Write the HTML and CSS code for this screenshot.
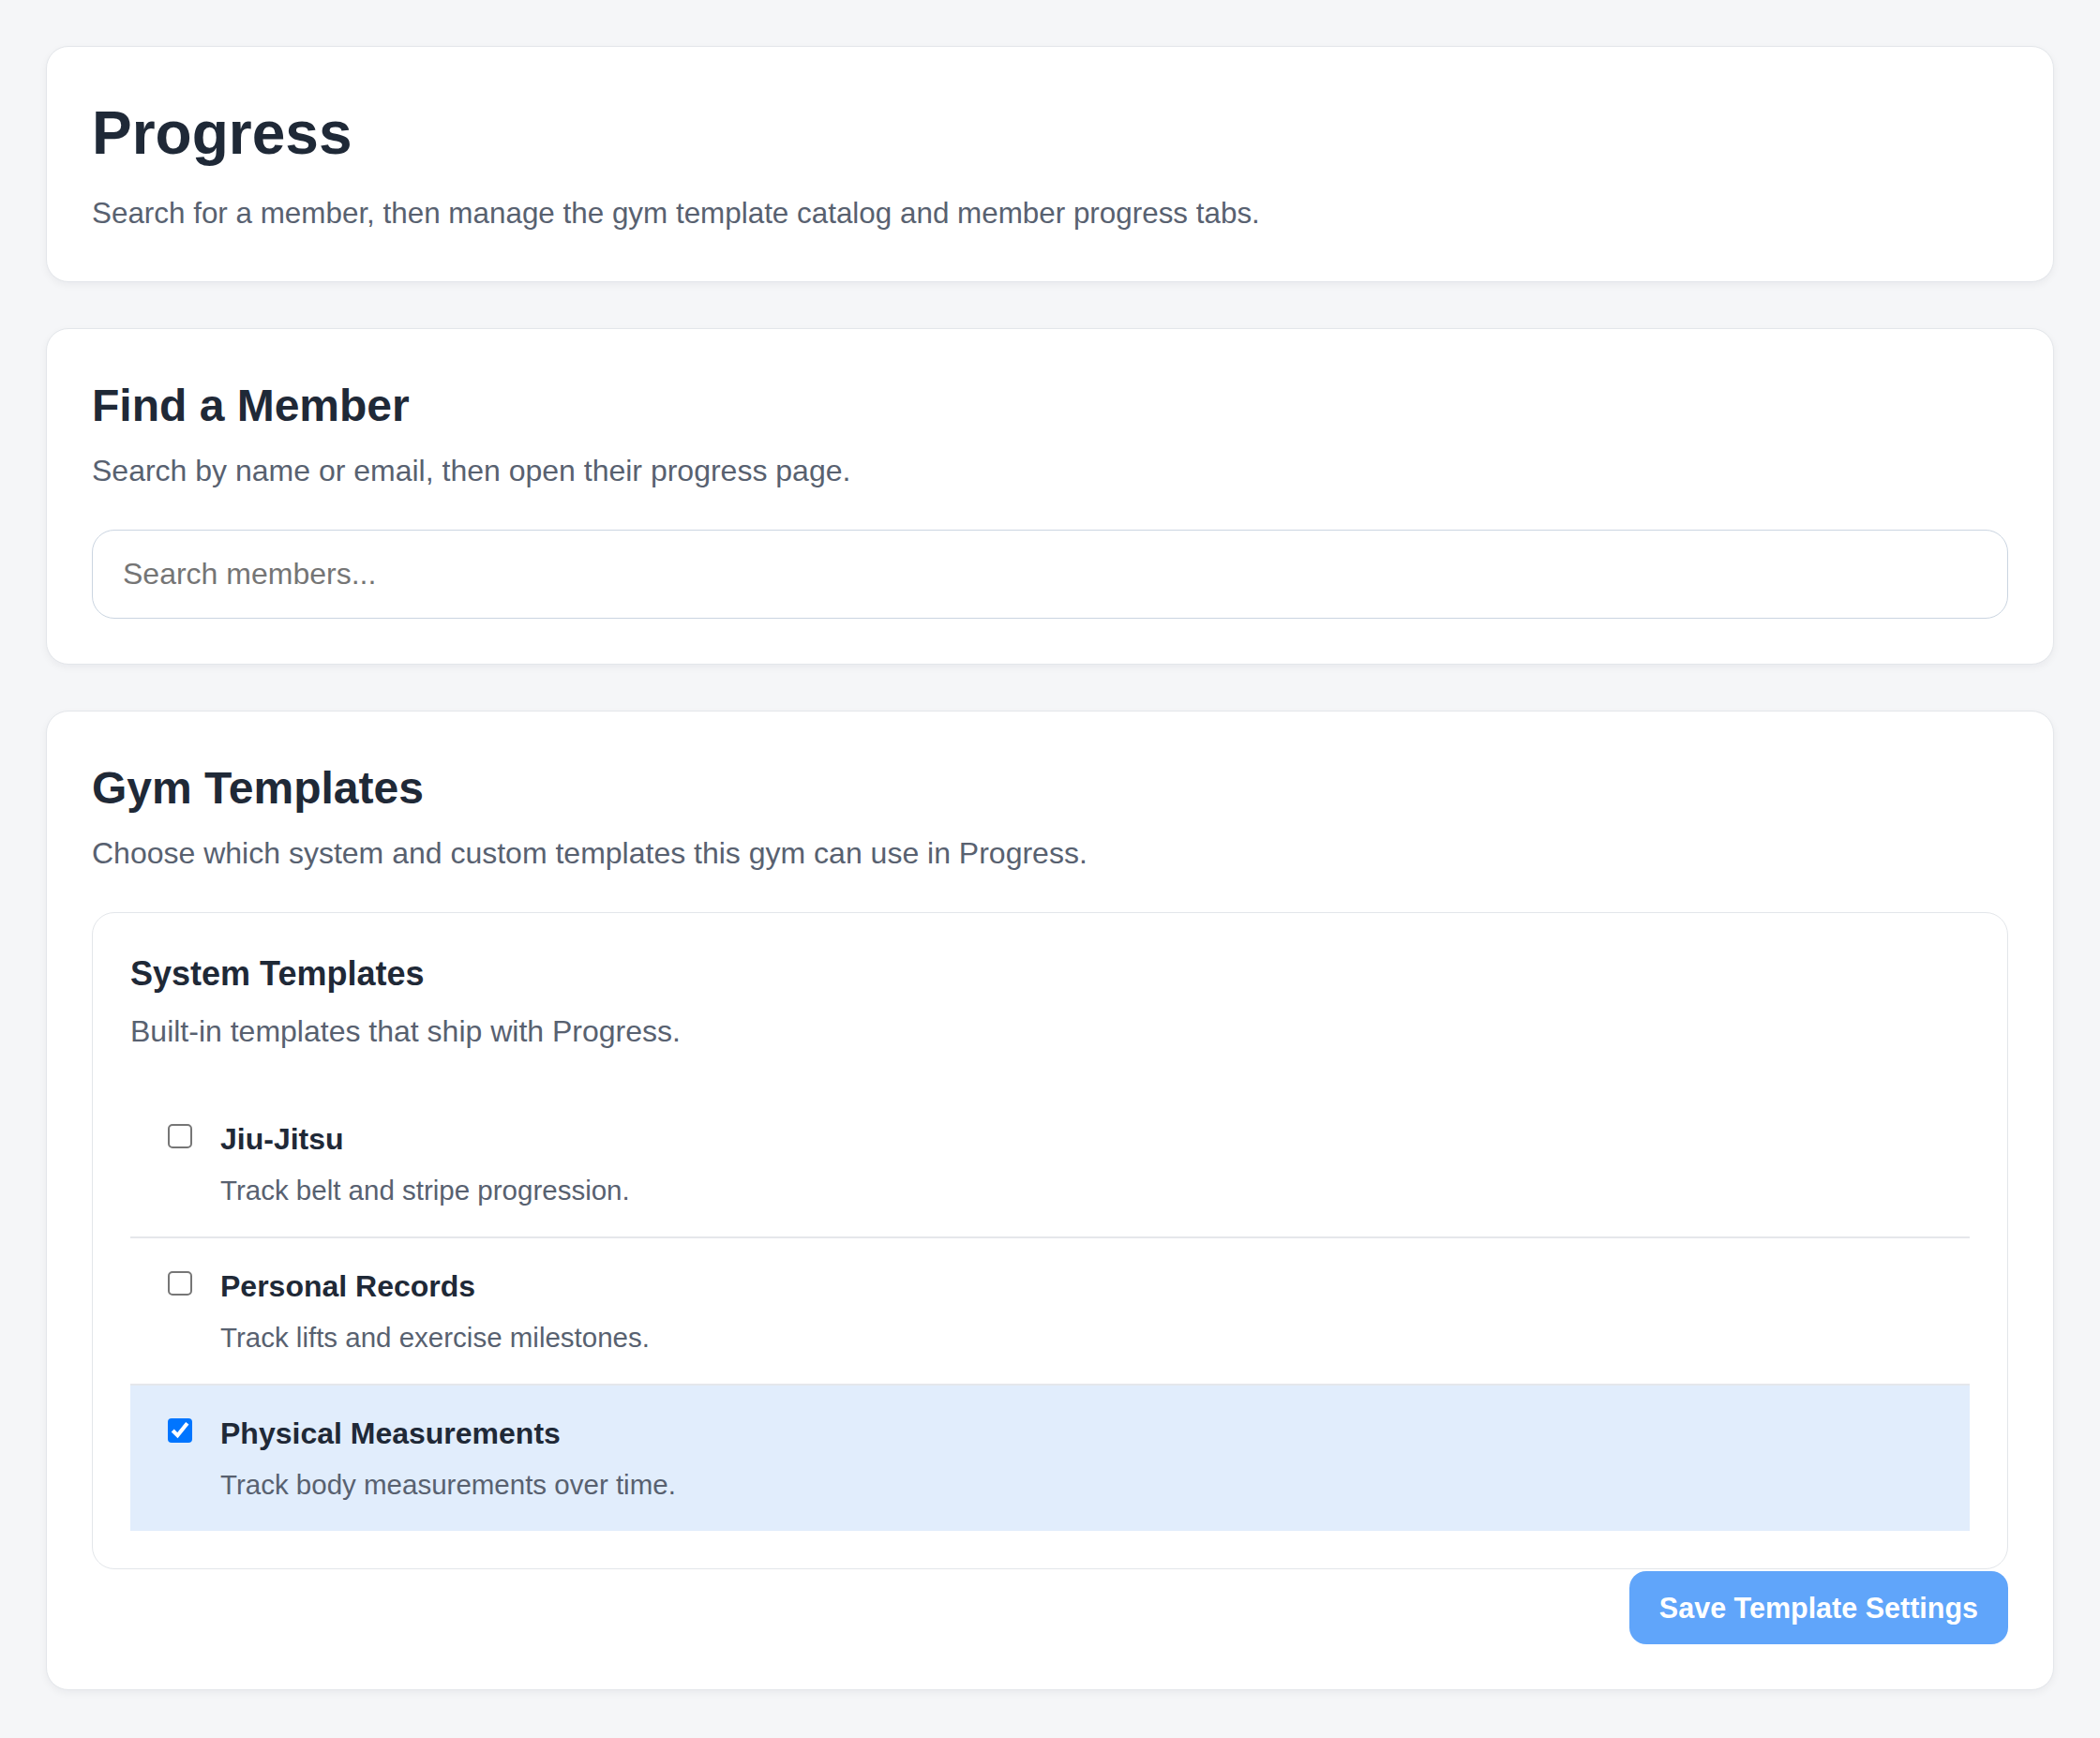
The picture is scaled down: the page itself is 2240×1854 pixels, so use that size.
FILE: index.html
```html
<!DOCTYPE html>
<html lang="en">

<head>
    <meta charset="utf-8">
    <meta name="viewport" content="width=device-width, initial-scale=1.0">
    <title>Progress</title>
    <link rel="stylesheet" href="styles.css">
</head>

<body>
    <div id="container">

        <!-- 页面标题 -->
        <div class="card">
            <h1 class="page-title">Progress</h1>
            <p class="card-desc intro">Search for a member, then manage the gym template catalog and member progress tabs.</p>
        </div>

        <!-- 搜索会员 -->
        <div class="card">
            <h2 class="card-title">Find a Member</h2>
            <p class="card-desc spaced">Search by name or email, then open their progress page.</p>
            <input type="text" id="memberSearch" class="search-input" placeholder="Search members...">
        </div>

        <!-- 模板设置 -->
        <div class="card">
            <h2 class="card-title">Gym Templates</h2>
            <p class="card-desc spaced">Choose which system and custom templates this gym can use in Progress.</p>

            <div class="template-box">
                <h3 class="box-title">System Templates</h3>
                <p class="card-desc spaced">Built-in templates that ship with Progress.</p>

                <div class="template-list">
                    <label class="template-row">
                        <input type="checkbox" name="template" value="jiu-jitsu">
                        <span class="template-text">
                            <span class="template-name">Jiu-Jitsu</span>
                            <span class="template-desc">Track belt and stripe progression.</span>
                        </span>
                    </label>
                    <label class="template-row">
                        <input type="checkbox" name="template" value="personal-records">
                        <span class="template-text">
                            <span class="template-name">Personal Records</span>
                            <span class="template-desc">Track lifts and exercise milestones.</span>
                        </span>
                    </label>
                    <label class="template-row selected">
                        <input type="checkbox" name="template" value="physical-measurements" checked>
                        <span class="template-text">
                            <span class="template-name">Physical Measurements</span>
                            <span class="template-desc">Track body measurements over time.</span>
                        </span>
                    </label>
                </div>
            </div>

            <div class="actions">
                <button class="save-btn" type="button">Save Template Settings</button>
            </div>
        </div>

    </div>

    <script>
        // 勾选时给整行加上高亮
        var boxes = document.querySelectorAll('.template-row input');
        boxes.forEach(function(box) {
            box.addEventListener('change', function() {
                box.closest('.template-row').classList.toggle('selected', box.checked);
            });
        });
    </script>
</body>

</html>
```

FILE: styles.css
```css
/* 基础样式 */
body {
    margin: 0;
    background-color: #f5f6f8;
    font-family: "Liberation Sans", Arial, Helvetica, sans-serif;
    color: #1f2937;
}

#container {
    padding: 49px;
    display: flex;
    flex-direction: column;
    gap: 49px;
}

/* 卡片 */
.card {
    background-color: #ffffff;
    border: 1px solid #e3e6ea;
    border-radius: 24px;
    padding: 48px;
    box-shadow: 0 3px 8px rgba(15, 23, 42, 0.05);
}

.page-title {
    margin: 0 0 16px;
    font-size: 64px;
    line-height: 1.4;
    font-weight: 700;
    color: #1f2937;
}

.card-title {
    margin: 0 0 12px;
    font-size: 48px;
    line-height: 1.4;
    font-weight: 700;
    color: #1f2937;
}

.card-desc {
    margin: 0;
    font-size: 32px;
    line-height: 48px;
    color: #586170;
}

/* 页面说明字号略小 */
.card-desc.intro {
    font-size: 31.4px;
}

/* 下面还有内容时留出间距 */
.card-desc.spaced {
    margin-bottom: 39px;
}

/* 搜索框 */
.search-input {
    display: block;
    box-sizing: border-box;
    width: 100%;
    height: 95px;
    padding: 0 32px;
    border: 1px solid #cbd5e1;
    border-radius: 24px;
    font-family: inherit;
    font-size: 32px;
    color: #1f2937;
    outline: none;
}

.search-input::placeholder {
    color: #757575;
}

/* 模板框 */
.template-box {
    border: 1px solid #e3e6ea;
    border-radius: 24px;
    padding: 40px;
}

.box-title {
    margin: 0 0 12px;
    font-size: 36px;
    line-height: 1.4;
    font-weight: 700;
    color: #1f2937;
}

.template-list {
    padding-top: 1px;
}

.template-row {
    display: flex;
    align-items: flex-start;
    gap: 30px;
    padding: 27px 40px;
    border-bottom: 2px solid #e5e7eb;
    cursor: pointer;
}

.template-row:last-child {
    border-bottom: none;
}

.template-row.selected {
    background-color: #e1edfc;
}

/* 复选框按两倍大小绘制 */
.template-row input {
    zoom: 2;
    width: 13px;
    height: 13px;
    margin: 4px 0 0;
    flex-shrink: 0;
    cursor: pointer;
}

.template-text {
    display: flex;
    flex-direction: column;
    gap: 8px;
}

.template-name {
    font-size: 32px;
    line-height: 48px;
    font-weight: 700;
    color: #1f2937;
}

.template-desc {
    font-size: 29.5px;
    line-height: 45px;
    color: #586170;
}

/* 保存按钮 */
.actions {
    display: flex;
    justify-content: flex-end;
    margin-top: 2px;
}

.save-btn {
    padding: 20px 32px;
    background-color: #60a5fa;
    color: #ffffff;
    border: none;
    border-radius: 18px;
    font-family: inherit;
    font-size: 30.5px;
    line-height: 38px;
    font-weight: 700;
    cursor: pointer;
}
```
